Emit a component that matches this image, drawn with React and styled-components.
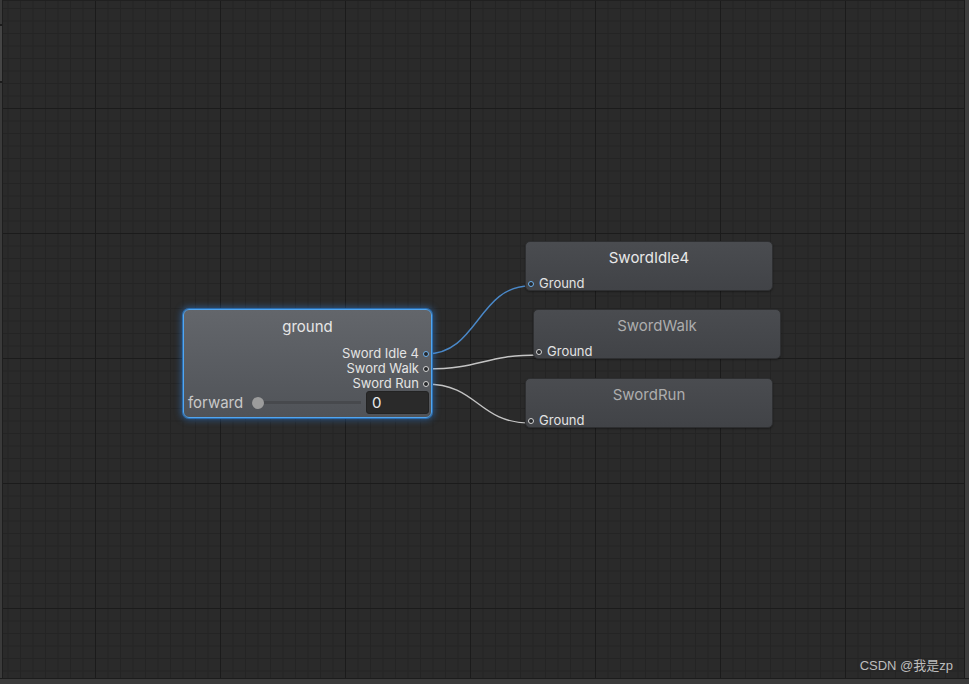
import styled, { createGlobalStyle, css } from "styled-components";

const GlobalStyle = createGlobalStyle`
  html, body {
    margin: 0;
    padding: 0;
    background: #282828;
  }
  * { box-sizing: border-box; }
`;

const nodes = [
  { id: "idle", title: "SwordIdle4", x: 522, y: 240, active: true },
  { id: "walk", title: "SwordWalk", x: 530, y: 308 },
  { id: "run", title: "SwordRun", x: 522, y: 377 },
];

const outputs = [
  { label: "Sword Idle 4", active: true },
  { label: "Sword Walk" },
  { label: "Sword Run" },
];

// wires in canvas coords, from output port to input port
const wires = [
  { from: [423, 353], to: [527, 285], color: "#4a88c8" },
  { from: [423, 368], to: [536, 354], color: "#c4c4c4" },
  { from: [423, 383], to: [527, 422], color: "#c4c4c4" },
];

function wirePath({ from, to }) {
  const mx = (from[0] + to[0]) / 2;
  return `M ${from[0]} ${from[1]} C ${mx} ${from[1]}, ${mx} ${to[1]}, ${to[0]} ${to[1]}`;
}

export default function App() {
  return (
    <Page>
      <GlobalStyle />
      <Main>
        <LeftStrip>
          <StripPart $h={24} />
          <StripPart $h={55} $light />
          <StripPart $grow />
        </LeftStrip>
        <Canvas>
          <Wires width="961" height="678">
            {wires.map((w, i) => (
              <path key={i} d={wirePath(w)} stroke={w.color} strokeWidth="1.4" fill="none" />
            ))}
          </Wires>

          <BlendNode style={{ left: 180, top: 308 }}>
            <NodeTitle>ground</NodeTitle>
            <OutputList>
              {outputs.map((o) => (
                <OutputRow key={o.label}>
                  {o.label}
                  <Port $active={o.active} />
                </OutputRow>
              ))}
            </OutputList>
            <ParamRow>
              <ParamLabel>forward</ParamLabel>
              <Slider>
                <Thumb />
              </Slider>
              <ValueField>0</ValueField>
            </ParamRow>
          </BlendNode>

          {nodes.map((n) => (
            <ClipNode key={n.id} style={{ left: n.x, top: n.y }}>
              <ClipTitle $active={n.active}>{n.title}</ClipTitle>
              <InputRow>
                <Port $active={n.active} />
                Ground
              </InputRow>
            </ClipNode>
          ))}
        </Canvas>
        <RightStrip />
      </Main>
      <BottomBar />
      <Watermark>CSDN @我是zp</Watermark>
    </Page>
  );
}

const Page = styled.div`
  position: relative;
  width: 969px;
  height: 684px;
  display: flex;
  flex-direction: column;
  background: #282828;
  font-family: Inter, "Noto Sans", "Noto Sans CJK SC", sans-serif;
  overflow: hidden;
`;

const Main = styled.div`
  flex: 1;
  display: flex;
`;

const LeftStrip = styled.div`
  width: 3px;
  display: flex;
  flex-direction: column;
  gap: 2px;
  background: #1c1c1c;
  border-right: 1px solid #1e1e1e;
`;

const StripPart = styled.div`
  width: 2px;
  background: ${(p) => (p.$light ? "#454545" : "#3a3a3a")};
  ${(p) => (p.$grow ? css`flex: 1;` : css`height: ${p.$h}px;`)}
`;

const RightStrip = styled.div`
  width: 5px;
  background: #3d3d3d;
  border-left: 1px solid #1a1a1a;
`;

const BottomBar = styled.div`
  height: 6px;
  background: #3a3a3a;
  border-top: 1px solid #1c1c1c;
`;

const Canvas = styled.div`
  position: relative;
  flex: 1;
  background-color: #2a2a2a;
  background-image:
    linear-gradient(to right, #1b1b1b 1px, transparent 1px),
    linear-gradient(to bottom, #1b1b1b 1px, transparent 1px),
    linear-gradient(to right, #242424 1px, transparent 1px),
    linear-gradient(to bottom, #242424 1px, transparent 1px);
  background-size: 125px 125px, 125px 125px, 12.5px 12.5px, 12.5px 12.5px;
  background-position: 92px 107px;
  border-top: 1px solid #202020;
`;

const Wires = styled.svg`
  position: absolute;
  left: 0;
  top: 0;
  pointer-events: none;
`;

const BlendNode = styled.div`
  position: absolute;
  width: 249px;
  height: 109px;
  display: flex;
  flex-direction: column;
  border: 1px solid #52a6f0;
  border-radius: 6px;
  background: linear-gradient(to bottom, #63666b, #505358);
  box-shadow: 0 0 0 1px #2b6db0, 0 0 6px 2px rgba(50, 130, 220, 0.5);
`;

const NodeTitle = styled.div`
  text-align: center;
  font-size: 15px;
  line-height: 34px;
  padding-bottom: 1px;
  color: #e6e6e6;
`;

const OutputList = styled.div`
  display: flex;
  flex-direction: column;
  padding-right: 2px;
`;

const OutputRow = styled.div`
  display: flex;
  justify-content: flex-end;
  align-items: center;
  gap: 4px;
  height: 15px;
  font-size: 13px;
  color: #e4e4e4;
`;

const Port = styled.span`
  width: 6px;
  height: 6px;
  border-radius: 50%;
  background: #26282b;
  border: 1px solid ${(p) => (p.$active ? "#6fb2ee" : "#d4d4d4")};
  flex: none;
  margin-top: 2px;
`;

const ParamRow = styled.div`
  display: flex;
  align-items: center;
  height: 23px;
  margin-top: 1px;
  padding: 0 2px 0 4px;
`;

const ParamLabel = styled.div`
  width: 64px;
  font-size: 15px;
  color: #c9c9c9;
`;

const Slider = styled.div`
  flex: 1;
  height: 23px;
  display: flex;
  align-items: center;
  margin-right: 5px;
  background: linear-gradient(#47494d, #47494d) no-repeat left center / 100% 3px;
`;

const Thumb = styled.div`
  width: 12px;
  height: 12px;
  border-radius: 50%;
  background: #9c9c9c;
`;

const ValueField = styled.div`
  width: 63px;
  height: 23px;
  padding-left: 5px;
  border: 1px solid #232323;
  border-radius: 3px;
  background: #2a2a2a;
  color: #eaeaea;
  font-size: 15px;
  line-height: 21px;
`;

const ClipNode = styled.div`
  position: absolute;
  width: 248px;
  height: 50px;
  display: flex;
  flex-direction: column;
  border: 1px solid #2e2f31;
  border-radius: 5px;
  background: linear-gradient(to bottom, #4a4c50, #414347);
  box-shadow: 0 1px 2px rgba(0, 0, 0, 0.35);
`;

const ClipTitle = styled.div`
  text-align: center;
  font-size: 15px;
  line-height: 32px;
  color: ${(p) => (p.$active ? "#e8e8e8" : "#adadad")};
`;

const InputRow = styled.div`
  display: flex;
  align-items: center;
  gap: 5px;
  margin-top: 2px;
  padding-left: 2px;
  height: 13px;
  font-size: 13px;
  color: #e2e2e2;
`;

const Watermark = styled.div`
  position: absolute;
  right: 16px;
  bottom: 10px;
  font-family: "Liberation Sans", Arial, "Noto Sans CJK SC", sans-serif;
  font-size: 13px;
  color: #bdbdbd;
`;
